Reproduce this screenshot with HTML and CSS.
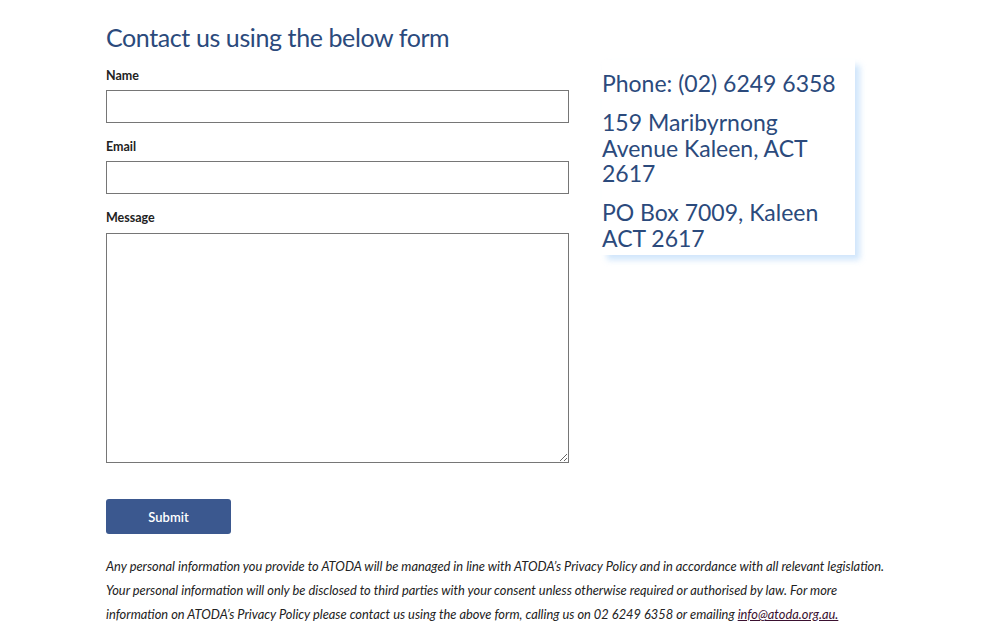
FILE: index.html
```html
<!DOCTYPE html>
<html lang="en">
<head>
<meta charset="utf-8">
<title>Contact</title>
<link rel="stylesheet" href="styles.css">
</head>
<body>
<div class="page">
  <div class="row">
    <div class="form-col">
      <h2 class="title">Contact us using the below form</h2>
      <form class="form">
        <label class="label" for="name">Name</label>
        <input class="input" id="name" type="text">
        <label class="label" for="email">Email</label>
        <input class="input" id="email" type="email">
        <label class="label" for="msg">Message</label>
        <textarea class="textarea" id="msg"></textarea>
        <button class="submit" type="button">Submit</button>
      </form>
    </div>
    <aside class="info">
      <p>Phone: (02) 6249 6358</p>
      <p>159 Maribyrnong Avenue Kaleen, ACT 2617</p>
      <p>PO Box 7009, Kaleen ACT 2617</p>
    </aside>
  </div>
  <p class="note">Any personal information you provide to ATODA will be managed in line with ATODA’s Privacy Policy and in accordance with all relevant legislation.<br>Your personal information will only be disclosed to third parties with your consent unless otherwise required or authorised by law. For more<br>information on ATODA’s Privacy Policy please contact us using the above form, calling us on 02 6249 6358 or emailing <a href="#">info@atoda.org.au.</a></p>
</div>
</body>
</html>
```
FILE: styles.css
```css
html, body { margin: 0; padding: 0; background: #fff; }
body { font-family: "Lato", "Liberation Sans", sans-serif; color: #222; }
.page { padding: 20px 0 0 106px; width: 850px; }
.row { display: flex; gap: 33px; align-items: flex-start; }
.form-col { width: 463px; }
.title { margin: 0 0 14px; font-size: 25px; font-weight: 400; color: #2b4a7c; line-height: 34px; letter-spacing: -0.4px; }
.form { display: flex; flex-direction: column; }
.label { font-size: 12.5px; font-weight: 700; color: #222; line-height: 16px; margin-bottom: 6px; }
.input { box-sizing: border-box; width: 463px; height: 33px; border: 1px solid #767676; border-radius: 0; margin: 0 0 16px; padding: 4px 8px; font: inherit; }
.textarea { box-sizing: border-box; width: 463px; height: 230px; border: 1px solid #767676; border-radius: 0; margin: 1px 0 0; font: inherit; resize: vertical; }
.submit { margin-top: 36px; width: 125px; height: 35px; border: none; border-radius: 3px; background: #3b588f; color: #fff; font: inherit; font-size: 13px; font-weight: 600; cursor: pointer; }
.info { margin-top: 40px; width: 253px; padding: 11px 0 4px 0; box-shadow: 5px 5px 6px rgba(190, 220, 250, 0.7); color: #2b4a7c; font-size: 23px; line-height: 25.5px; }
.info p { margin: 0 0 13.5px; }
.info p:last-child { margin-bottom: 0; }
.note { margin: 20px 0 0; font-size: 12.85px; font-style: italic; line-height: 24px; color: #222; white-space: nowrap; }
.note a { color: #3a1030; text-decoration: underline; }
```
